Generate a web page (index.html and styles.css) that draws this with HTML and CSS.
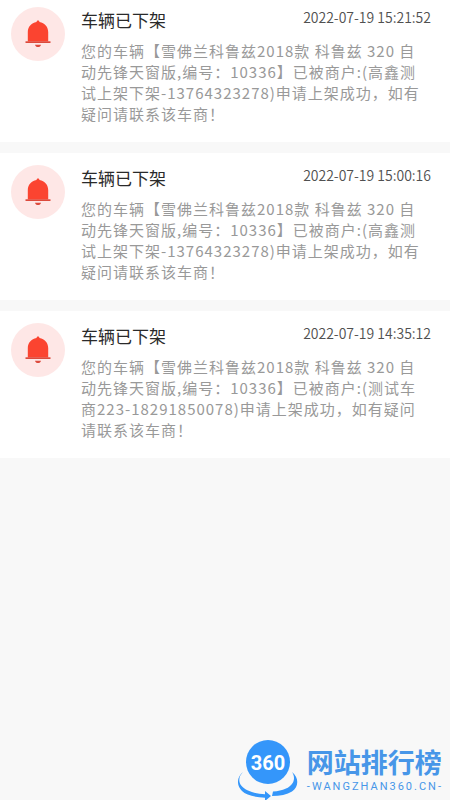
FILE: index.html
```html
<!DOCTYPE html>
<html lang="zh-CN">
<head>
<meta charset="utf-8">
<meta name="viewport" content="width=device-width, initial-scale=1">
<title>车辆已下架</title>
<link rel="stylesheet" href="styles.css">
</head>
<body>
<svg class="symbols" aria-hidden="true">
  <symbol id="bell" viewBox="0 0 54 54">
    <circle cx="27" cy="27" r="27" fill="#fee7e6"/>
    <path d="M27 13.500c.9 0 1.400.6 1.500 1.500 5.200.8 8.700 4.900 8.700 10v9.500h-20.400V25c0-5.100 3.500-9.200 8.700-10 .1-.9.600-1.500 1.500-1.500z" fill="#fb4430"/>
    <path d="M14.500 34.300h25V36h-25z" fill="#dc4a3c"/>
    <path d="M24 37.700h6c-.3 1.500-1.500 2.300-3 2.300s-2.700-.8-3-2.300z" fill="#dc4a3c"/>
  </symbol>
</svg>
<main class="list">
  <article class="card">
    <svg class="icon" aria-hidden="true"><use href="#bell"/></svg>
    <div class="body">
      <header class="head"><h2 class="title">车辆已下架</h2><time class="time">2022-07-19 15:21:52</time></header>
      <p class="text">您的车辆【雪佛兰科鲁兹2018款 科鲁兹 320 自动先锋天窗版,编号：10336】已被商户:(高鑫测试上架下架-13764323278)申请上架成功，如有疑问请联系该车商！</p>
    </div>
  </article>
  <article class="card">
    <svg class="icon" aria-hidden="true"><use href="#bell"/></svg>
    <div class="body">
      <header class="head"><h2 class="title">车辆已下架</h2><time class="time">2022-07-19 15:00:16</time></header>
      <p class="text">您的车辆【雪佛兰科鲁兹2018款 科鲁兹 320 自动先锋天窗版,编号：10336】已被商户:(高鑫测试上架下架-13764323278)申请上架成功，如有疑问请联系该车商！</p>
    </div>
  </article>
  <article class="card">
    <svg class="icon" aria-hidden="true"><use href="#bell"/></svg>
    <div class="body">
      <header class="head"><h2 class="title">车辆已下架</h2><time class="time">2022-07-19 14:35:12</time></header>
      <p class="text">您的车辆【雪佛兰科鲁兹2018款 科鲁兹 320 自动先锋天窗版,编号：10336】已被商户:(测试车商223-18291850078)申请上架成功，如有疑问请联系该车商！</p>
    </div>
  </article>
</main>
<footer class="brand">
  <svg class="logo" viewBox="0 0 60 60" role="img" aria-label="360">
    <circle cx="30" cy="22" r="22" fill="#3496fa"/>
    <path d="M5 32C-1 38 0 46 10 50.500c5 2.400 11 3.500 17 3.700V51l6 5-6 5v-3.300C17 57.500 8 55 4 51-2 45-1 37 5 32z" fill="#3496fa"/>
    <path d="M54 32c4 6 2 13-6 16.500-4 1.800-8 2.700-13 3l-1 4.500c8 0 15-1.500 20-4.500 7-5 7-14 0-19.500z" fill="#3496fa"/>
    <text class="logo-text" x="30" y="30" text-anchor="middle">360</text>
  </svg>
  <div class="brand-words">
    <span class="brand-name">网站排行榜</span>
    <span class="brand-url">-WANGZHAN360.CN-</span>
  </div>
</footer>
</body>
</html>
```
FILE: styles.css
```css
* {
  box-sizing: border-box;
}

body {
  margin: 0;
  min-height: 100vh;
  display: flex;
  flex-direction: column;
  background: #f8f8f8;
  font-family: "Noto Sans CJK SC", sans-serif;
}

.symbols {
  position: absolute;
  width: 0;
  height: 0;
}

.list {
  display: flex;
  flex-direction: column;
  gap: 11px;
}

.card {
  display: flex;
  gap: 16px;
  padding: 12px 19px 18px 11px;
  background: #fff;
}

.card:first-child {
  padding-top: 7px;
}

.icon {
  flex: none;
  width: 54px;
  height: 54px;
}

.body {
  flex: 1;
  min-width: 0;
}

.head {
  display: flex;
  justify-content: space-between;
  align-items: flex-start;
}

.title {
  margin: 0;
  font-size: 17px;
  font-weight: 400;
  line-height: 26px;
  color: #2a2a2a;
}

.time {
  font-size: 14px;
  font-weight: 350;
  line-height: 21px;
  color: #505050;
}

.text {
  margin: 7px 0 0;
  padding-right: 5px;
  font-size: 15px;
  font-weight: 400;
  line-height: 21px;
  letter-spacing: 1px;
  color: #999;
}

.brand {
  display: flex;
  justify-content: flex-end;
  gap: 9px;
  margin-top: auto;
  padding-right: 7px;
}

.logo {
  width: 60px;
  height: 60px;
}

.logo-text {
  font-family: "Roboto", sans-serif;
  font-size: 20px;
  font-weight: 700;
  fill: #fff;
}

.brand-words {
  display: flex;
  flex-direction: column;
  padding-top: 5px;
  color: #4796e8;
}

.brand-name {
  font-size: 27px;
  font-weight: 700;
  line-height: 34px;
}

.brand-url {
  font-family: "Roboto", sans-serif;
  font-size: 11px;
  line-height: 16px;
  letter-spacing: 2px;
}
```
